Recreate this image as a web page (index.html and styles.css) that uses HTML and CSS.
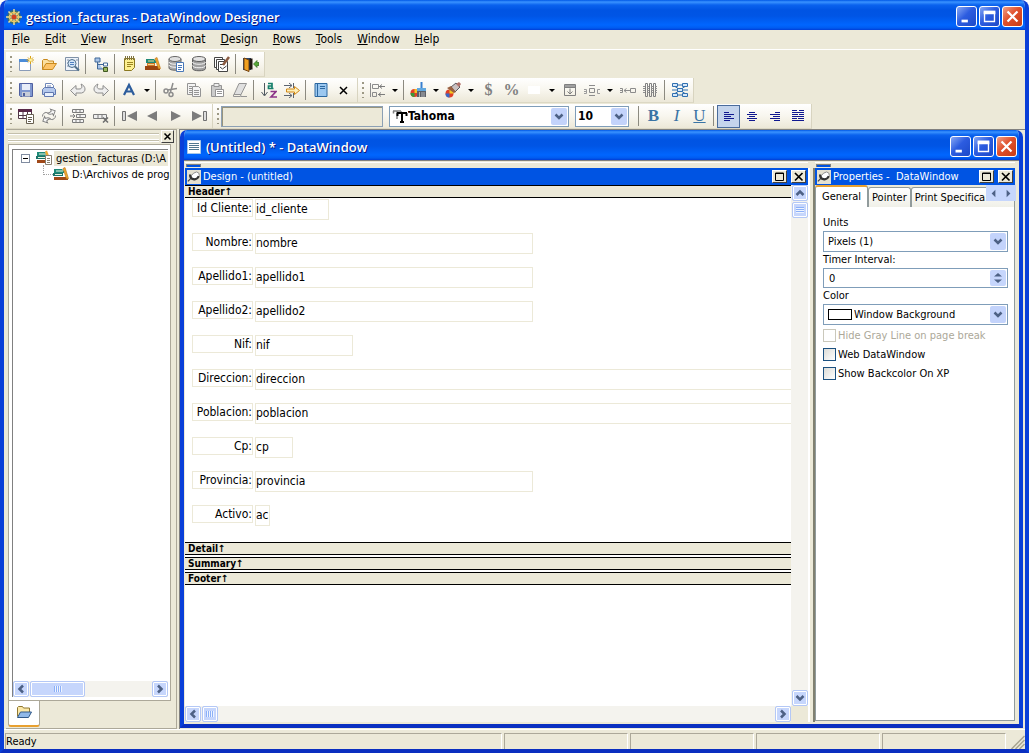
FILE: index.html
```html
<!DOCTYPE html>
<html lang="es">
<head>
  <meta charset="UTF-8">
  <title>gestion_facturas - DataWindow Designer</title>
  <link rel="stylesheet" href="styles.css">
</head>
<body>
  <div class="window">
    <header class="titlebar">
      <svg class="app-icon" viewBox="0 0 16 16"><circle cx="8" cy="8" r="7" fill="#3d6f6a"/><path d="M8 0v16M0 8h16M2.500 2.500l11 11M13.500 2.500l-11 11" stroke="#e8dc9a" stroke-width="1.500"/><circle cx="8" cy="8" r="4.500" fill="none" stroke="#f0c860" stroke-width="1.500"/><circle cx="8" cy="8" r="2.500" fill="#d04020"/></svg>
      <h1>gestion_facturas - DataWindow Designer</h1>
      <div class="caption-buttons">
        <button class="cap" aria-label="Minimize"><svg viewBox="0 0 21 21"><path d="M5 14h7v3H5z" fill="#fff"/></svg></button>
        <button class="cap" aria-label="Maximize"><svg viewBox="0 0 21 21"><path d="M5 6h11v10H5z" fill="none" stroke="#fff" stroke-width="1.500"/><path d="M4 4h13v4H4z" fill="#fff"/></svg></button>
        <button class="cap cap-close" aria-label="Close"><svg viewBox="0 0 21 21"><path d="M5 5l11 11M16 5L5 16" stroke="#fff" stroke-width="2.500"/></svg></button>
      </div>
    </header>

    <nav class="menu">
      <a href="#"><u>F</u>ile</a>
      <a href="#"><u>E</u>dit</a>
      <a href="#"><u>V</u>iew</a>
      <a href="#"><u>I</u>nsert</a>
      <a href="#">F<u>o</u>rmat</a>
      <a href="#"><u>D</u>esign</a>
      <a href="#"><u>R</u>ows</a>
      <a href="#"><u>T</u>ools</a>
      <a href="#"><u>W</u>indow</a>
      <a href="#"><u>H</u>elp</a>
    </nav>

    <div class="toolbars">
      <div class="bar-row">
        <div class="bar">
          <span class="grip"></span>
          <button class="tb" aria-label="New"><svg viewBox="0 0 16 16"><path d="M1.500 4.500h11v10h-11z" fill="#fff" stroke="#8a9cb8"/><path d="M1 3h9v3H1z" fill="#4c8cd8"/><path d="M12.500 0v8M8.500 4h8M10 1.500l5 5M15 1.500l-5 5" stroke="#d8a010"/><circle cx="12.500" cy="4" r="1.500" fill="#fff4a0"/></svg></button>
          <button class="tb" aria-label="Open"><svg viewBox="0 0 16 16"><path d="M1.500 13.500V4.500l1-1h4l1 1.500h5v3" fill="#fbe0a0" stroke="#c98a1e"/><path d="M1.500 13.500L5 7.500h10.500l-4 6z" fill="#fdc468" stroke="#c98a1e"/></svg></button>
          <button class="tb" aria-label="Preview"><svg viewBox="0 0 16 16"><path d="M1.500 1.500h13v13h-13z" fill="#eef3fa" stroke="#8092a8"/><path d="M3 4h2M3 7h1M3 10h2M12 4h2" stroke="#8092a8"/><circle cx="8" cy="7.500" r="4" fill="#d4e6f8" stroke="#50708c"/><path d="M6 6.500h4M6 8.500h4" stroke="#5080c0"/><path d="M11 10.500l4 4" stroke="#50708c" stroke-width="2"/></svg></button>
          <span class="sep"></span>
          <button class="tb" aria-label="System tree"><svg viewBox="0 0 16 16"><path d="M2 2h5v4H2zM4.500 6v7H10M4.500 8.500H10" fill="#a8c4e8" stroke="#406898"/><path d="M10.500 7h4v3h-4z" fill="#fff" stroke="#406898"/><path d="M10.500 11.500h4v4h-4z" fill="#98b860" stroke="#405820"/></svg></button>
          <span class="sep"></span>
          <button class="tb" aria-label="Output"><svg viewBox="0 0 16 16"><path d="M2.500 2.500h10v9l-3 3h-7z" fill="#fdf090" stroke="#8a7820"/><path d="M3.500 0v4M5.500 0v4M7.500 0v4M9.500 0v4M11.500 0v4" stroke="#807440"/><path d="M5 6.500h6M5 8.500h6M5 10.500h4" stroke="#9a8420"/></svg></button>
          <button class="tb" aria-label="Library list"><svg viewBox="0 0 16 16"><path d="M1 3h8l2 2v2H1z" fill="#1f8a78"/><path d="M2 7h8v3H2z" fill="#d07828"/><path d="M0 10h15v4H0z" fill="#9a4410"/><path d="M3 5h6M3 8.500h6" stroke="#f4d890"/><path d="M10 2.500l2-1 3.500 11-2 .5z" fill="#f0a830" stroke="#b87010" stroke-width=".6"/></svg></button>
          <button class="tb" aria-label="Database profile"><svg viewBox="0 0 16 16"><path d="M1 3v9c0 3 12 3 12 0V3z" fill="#a8a8a8" stroke="#686868"/><ellipse cx="7" cy="3" rx="6" ry="2.500" fill="#e0e0e0" stroke="#686868"/><path d="M1 6c0 3 12 3 12 0M1 9c0 3 12 3 12 0" fill="none" stroke="#f4f4f4"/><path d="M8.500 6.500h7v9h-7z" fill="#fff" stroke="#4878b8"/><path d="M10 9.500h4M10 11.500h4M10 13.500h3" stroke="#4878b8"/></svg></button>
          <button class="tb" aria-label="Database"><svg viewBox="0 0 16 16"><path d="M1.500 3v9.500c0 3 13 3 13 0V3z" fill="#a0a0a0" stroke="#606060"/><ellipse cx="8" cy="3" rx="6.500" ry="2.500" fill="#e4e4e4" stroke="#606060"/><path d="M1.500 6c0 3 13 3 13 0M1.500 9.500c0 3 13 3 13 0" fill="none" stroke="#f4f4f4"/></svg></button>
          <button class="tb" aria-label="Edit"><svg viewBox="0 0 16 16"><path d="M.5 1.500h8v10h-8z" fill="#fff" stroke="#444"/><path d="M2.500 3.500h8v10h-8z" fill="#fff" stroke="#444"/><path d="M4.500 5.500h9v10h-9z" fill="#fff" stroke="#444"/><path d="M6 11l2.500 2 4-3M6 8.500h3" fill="none" stroke="#444"/><path d="M9 9l6-8" stroke="#8a5a40" stroke-width="2.500"/></svg></button>
          <span class="sep"></span>
          <button class="tb" aria-label="Exit"><svg viewBox="0 0 16 16"><path d="M0 2h8v12H0z" fill="#284a78"/><path d="M1 2l5 2v11.500l-5-2z" fill="#f0a020" stroke="#704010"/><path d="M6.500 2.500h3v11h-3z" fill="#201810"/><path d="M10.500 8L14 4.500v2h2v3h-2v2z" fill="#58a838" stroke="#306820" stroke-width=".7"/></svg></button>
        </div>
      </div>

      <div class="bar-row">
        <div class="bar">
          <span class="grip"></span>
          <button class="tb" aria-label="Save"><svg viewBox="0 0 16 16"><path d="M1.500 1.500h13v13h-12l-1-1z" fill="#8098d0" stroke="#5060a0"/><path d="M4 2h8v6H4z" fill="#e8edf8"/><path d="M4 10h8v4.500H4z" fill="#c8cdd8"/><path d="M5 11h2v3H5z" fill="#50609c"/></svg></button>
          <button class="tb" aria-label="Print"><svg viewBox="0 0 16 16"><path d="M4.500 7V1.500h6l2 2V7" fill="#fff" stroke="#7088b8"/><path d="M1.500 7.500l2-2h9l2 2v5h-13z" fill="#b4c8ec" stroke="#6078b0"/><path d="M3.500 10.500h9v4h-9z" fill="#e8f0fc" stroke="#6078b0"/><path d="M6 4h4" stroke="#7088b8"/></svg></button>
          <span class="sep"></span>
          <button class="tb" aria-label="Undo"><svg viewBox="0 0 16 16"><path d="M.5 8.500l5.500-5V7h3c3 0 3.500-2 2-5 5 2 5.500 8 .5 9H6v3z" fill="#eee" stroke="#8c8c8c"/></svg></button>
          <button class="tb" aria-label="Redo"><svg viewBox="0 0 16 16"><path d="M15.500 8.500l-5.500-5V7H7C4 7 3.500 5 5 2 0 4-.5 10 4.500 11H10v3z" fill="#eee" stroke="#8c8c8c"/></svg></button>
          <span class="sep"></span>
          <button class="tb drop" aria-label="Text"><svg viewBox="0 0 16 16"><path d="M3 13L8 3l5 10M4.500 9.500h7" fill="none" stroke="#2c5c9c" stroke-width="2.200"/></svg></button>
          <span class="sep"></span>
          <button class="tb" aria-label="Cut"><svg viewBox="0 0 16 16"><path d="M10 1L7.500 10M4.500 8L14 6.500" stroke="#8c8c8c" stroke-width="1.500"/><circle cx="3" cy="9" r="2" fill="none" stroke="#8c8c8c" stroke-width="1.500"/><circle cx="8" cy="12.500" r="2" fill="none" stroke="#8c8c8c" stroke-width="1.500"/></svg></button>
          <button class="tb" aria-label="Copy"><svg viewBox="0 0 16 16"><path d="M1.500 1.500h8v11h-8z" fill="#f4f4f4" stroke="#949494"/><path d="M6.500 4.500h6l2 2v8h-8z" fill="#f4f4f4" stroke="#949494"/><path d="M3 4.500h3M3 6.500h3M3 8.500h3M3 10.500h3M8 8.500h5M8 10.500h5M8 12.500h5" stroke="#949494"/></svg></button>
          <button class="tb" aria-label="Paste"><svg viewBox="0 0 16 16"><path d="M2.500 3.500h10v11h-10z" fill="#ccc" stroke="#949494"/><path d="M5 1.500h5v3H5z" fill="#eee" stroke="#949494"/><path d="M6.500 7.500h8v7h-8z" fill="#fff" stroke="#949494"/><path d="M8 9.500h5M8 11.500h5" stroke="#949494"/></svg></button>
          <button class="tb" aria-label="Clear"><svg viewBox="0 0 16 16"><path d="M7 1.500h7.500L9 12.500H2z" fill="#e0e0e0" stroke="#949494"/><path d="M1.500 12.500v2h7L9 12.500M9 14.500h6" fill="none" stroke="#949494"/></svg></button>
          <span class="sep"></span>
          <button class="tb" aria-label="Sort"><svg viewBox="0 0 16 16"><path d="M3.500 1v12M.5 10l3 4 3-4" fill="none" stroke="#505860"/><path d="M7 1.500h4v5M11 4H7.500v2.500H12.500" fill="none" stroke="#18806c" stroke-width="1.700"/><path d="M9.500 9.500H15L10 15h6" fill="none" stroke="#8c3488" stroke-width="1.700"/></svg></button>
          <button class="tb" aria-label="Tab order"><svg viewBox="0 0 16 16"><path d="M0 3.500h8M0 13.500h8M5 1l3 2.500L5 6M5 11l3 2.500L5 16M9.500 1v5M9.500 11v5" fill="none" stroke="#5c6470"/><path d="M2.500 7h8V4.500l5 4-5 4V10h-8z" fill="#fff0b8" stroke="#d08818"/></svg></button>
          <span class="sep"></span>
          <button class="tb" aria-label="Properties"><svg viewBox="0 0 16 16"><path d="M2 1.500h12v13H2z" fill="#9cc8f0" stroke="#2c68a0"/><path d="M4.500 2v12" stroke="#2c68a0"/><path d="M7 4.500h5M7 6.500h5" stroke="#2c68a0"/></svg></button>
          <button class="tb" aria-label="Close"><svg viewBox="0 0 16 16"><path d="M4 5l7 7M11 5l-7 7" stroke="#000" stroke-width="1.500"/></svg></button>
        </div>
        <div class="bar">
          <span class="grip"></span>
          <button class="tb drop" aria-label="Align"><svg viewBox="0 0 16 16"><path d="M1.500 1v14M3.500 2.500h6v4h-6zM3.500 10.500h4v4h-4z" fill="none" stroke="#8c8c8c"/><path d="M10 4.500h6M13 2.500l-2.500 2 2.500 2M9 12.500h7M12 10.500l-2.500 2 2.500 2" fill="none" stroke="#7c7c7c"/></svg></button>
          <span class="sep"></span>
          <button class="tb drop" aria-label="Background colour"><svg viewBox="0 0 16 16"><circle cx="4.500" cy="11" r="4" fill="#e04028"/><path d="M4.500 7a4 4 0 014 4h-4z" fill="#f4c820"/><path d="M.5 11h4v4a4 4 0 01-4-4z" fill="#3c9838"/><path d="M10.500 0h2v6h-2z" fill="#3880d0"/><path d="M7 6h9v3H7z" fill="#60a8e0"/><path d="M7 9h9v6H7z" fill="#5c6068"/><path d="M9.500 10v5M12 10v5M14 10v5" stroke="#b0b4b8"/></svg></button>
          <button class="tb drop" aria-label="Foreground colour"><svg viewBox="0 0 16 16"><circle cx="4.500" cy="11.500" r="4" fill="#e04028"/><path d="M4.500 7.500a4 4 0 014 4h-4z" fill="#f4c820"/><path d="M.5 11.500h4v4a4 4 0 01-4-4z" fill="#3868c8"/><path d="M6 5l5-4 4 4-5 5z" fill="#c8c0c0" stroke="#585860"/><path d="M11 2l3-2 2 2-2 3z" fill="#b07068"/><path d="M2 6l4-2 5 6-2 1z" fill="#986040"/></svg></button>
          <button class="tb sign" aria-label="Currency">$</button>
          <button class="tb sign" aria-label="Percent">%</button>
          <button class="tb drop" aria-label="Border"><svg viewBox="0 0 16 16"><path d="M2 4h12v8H2z" fill="#fff"/></svg></button>
          <button class="tb" aria-label="Slide"><svg viewBox="0 0 16 16"><path d="M2.500 2.500h11v11h-11zM2.500 5.500h11M8 6.500v5M5.500 9.500L8 12l2.500-2.500" fill="none" stroke="#808080"/><path d="M3 3h10v2H3z" fill="#a0a0a0"/></svg></button>
          <button class="tb drop" aria-label="Space"><svg viewBox="0 0 16 16"><path d="M5 3.500h6M5.500 6.500h5v4h-5zM5 13.500h6" fill="none" stroke="#8c8c8c"/><path d="M0 7.500h2.500v4H0M0 9.500h2.500M16 7.500h-2.500v4H16" fill="none" stroke="#9c9c9c"/></svg></button>
          <button class="tb" aria-label="Width"><svg viewBox="0 0 16 16"><path d="M0 6.500h2.500v4H0M0 8.500h2.500M4 8.500h6M6.500 6.500L4 8.500l2.500 2M10.500 6.500h5v4h-5z" fill="none" stroke="#8c8c8c"/></svg></button>
          <button class="tb" aria-label="Columns"><svg viewBox="0 0 16 16"><path d="M2.500 1.500h2v13h-2zM6.500 1.500h2v13h-2zM10.500 1.500h2v13h-2z" fill="none" stroke="#808080"/><path d="M0 4.500h16M0 6.500h16M0 8.500h16M0 10.500h16" stroke="#909090" stroke-dasharray="2 2"/></svg></button>
          <span class="sep"></span>
          <button class="tb" aria-label="Grid"><svg viewBox="0 0 16 16"><path d="M.5 1.500h5v3h-5zM10.500 1.500h5v3h-5zM.5 11.500h5v3h-5zM10.500 11.500h5v3h-5zM5.500 6.500h5v3h-5z" fill="#d8e8f8" stroke="#3070b0"/><path d="M6 3h4M0 8h5M11 8h5M6 13h4M3 4.500l3 2M13 4.500l-3 2M6 9.500l-3 2M10 9.500l3 2" stroke="#3070b0"/></svg></button>
        </div>
      </div>

      <div class="bar-row">
        <div class="bar">
          <span class="grip"></span>
          <button class="tb" aria-label="Retrieve"><svg viewBox="0 0 16 16"><path d="M.5 1.500h13v9H.5z" fill="#fff" stroke="#503848"/><path d="M0 1h14v3H0z" fill="#582848"/><path d="M1 7.500h8M5 4v6M9.500 4v3" stroke="#503848"/><path d="M8.500 6.500h7v9h-7z" fill="#fff" stroke="#686050"/><path d="M10 9.500h4M10 11.500h4M10 13.500h3" stroke="#686050"/></svg></button>
          <button class="tb" aria-label="Refresh"><svg viewBox="0 0 16 16"><path d="M8.500 1.500h5v5L12 5C10 7 8 7 6.500 6 8.500 6 9.500 4.500 10 3z" fill="#f4f4f4" stroke="#808080" transform="rotate(20 10 4)"/><path d="M7.500 14.500h-5v-5L4 11c2-2 4-2 5.500-1-2 0-3 1.500-3.500 3z" fill="#f4f4f4" stroke="#808080" transform="rotate(20 6 12)"/><path d="M1.500 8.500c0-3 2-4 4-4M14.500 7.500c0 3-2 4-4 4" fill="none" stroke="#808080"/></svg></button>
          <span class="sep"></span>
          <button class="tb" aria-label="Insert row"><svg viewBox="0 0 16 16"><path d="M2.500 1.500h11v3h-11zM6.500 6.500h9v3h-9zM2.500 11.500h11v3h-11z" fill="#f4f4f4" stroke="#7c7c7c"/><path d="M6 2v3M10 2v3M10 7v3M6 12v3M10 12v3M0 8h5M3 6l2 2-2 2" fill="none" stroke="#7c7c7c"/></svg></button>
          <button class="tb" aria-label="Delete row"><svg viewBox="0 0 16 16"><path d="M.5 6.500h13v4H.5z" fill="#eee" stroke="#7c7c7c"/><path d="M5 7v3M9 7v3" stroke="#7c7c7c"/><path d="M10 9.500l5 5M15 9.500l-5 5" stroke="#6c6c6c" stroke-width="1.500"/></svg></button>
          <span class="sep"></span>
          <button class="tb" aria-label="First"><svg viewBox="0 0 16 16"><path d="M.5 3.500h3v9h-3z" fill="#ddd" stroke="#707070"/><path d="M5 8l10-5v10z" fill="#7c7c7c"/></svg></button>
          <button class="tb" aria-label="Previous"><svg viewBox="0 0 16 16"><path d="M2 8l10-5v10z" fill="#7c7c7c"/></svg></button>
          <button class="tb" aria-label="Next"><svg viewBox="0 0 16 16"><path d="M13 8L3 3v10z" fill="#7c7c7c"/></svg></button>
          <button class="tb" aria-label="Last"><svg viewBox="0 0 16 16"><path d="M12.500 3.500h3v9h-3z" fill="#ddd" stroke="#707070"/><path d="M11 8L1 3v10z" fill="#7c7c7c"/></svg></button>
        </div>
        <div class="bar">
          <span class="grip"></span>
          <input class="text-edit" type="text" aria-label="Text" disabled>
          <div class="combo combo-font">
            <svg viewBox="0 0 16 16"><path d="M1 3h8M5 3v8M1.500 3v2.500M9 3v2" stroke="#808080" stroke-width="1.500"/><path d="M5 5h10M10 5v9M5.500 5v3M14.500 5v3M8 14h4" stroke="#000" stroke-width="2"/></svg>
            <select aria-label="Font"><option>Tahoma</option></select>
          </div>
          <div class="combo combo-size">
            <select aria-label="Font size"><option>10</option></select>
          </div>
          <span class="sep"></span>
          <button class="tb letter bold">B</button>
          <button class="tb letter italic">I</button>
          <button class="tb letter under">U</button>
          <span class="sep"></span>
          <button class="tb active" aria-label="Align left"><svg viewBox="0 0 16 16"><path d="M3 4.500h5M3 6.500h10M3 8.500h7M3 10.500h10M3 12.500h6" stroke="#101890"/></svg></button>
          <button class="tb" aria-label="Align centre"><svg viewBox="0 0 16 16"><path d="M5 4.500h6M3 6.500h10M5 8.500h6M3 10.500h10M5 12.500h6" stroke="#101890"/></svg></button>
          <button class="tb" aria-label="Align right"><svg viewBox="0 0 16 16"><path d="M8 4.500h5M3 6.500h10M6 8.500h7M3 10.500h10M7 12.500h6" stroke="#101890"/></svg></button>
          <button class="tb" aria-label="Justify"><svg viewBox="0 0 16 16"><path d="M2 2.500h5M9 2.500h5M2 4.500h12M2 6.500h6M9 6.500h5M2 8.500h12M2 10.500h5M8 10.500h6M2 12.500h12" stroke="#101890"/></svg></button>
        </div>
      </div>
    </div>

    <main class="workspace">
      <aside class="dock">
        <div class="dock-head">
          <span class="dock-grip"></span>
          <button class="box-btn dock-close" aria-label="Close"><svg viewBox="0 0 12 12"><path d="M2.500 2.500l6 6M8.500 2.500l-6 6" stroke="#000" stroke-width="1.500"/></svg></button>
        </div>
        <div class="dock-panel">
          <div class="tree">
            <ul>
              <li class="root">
                <button class="toggle" aria-label="Collapse"></button>
                <svg viewBox="0 0 16 16"><path d="M1 2h8l2 2v2H1z" fill="#1f8a78"/><path d="M0 6h10v3H0z" fill="#1c7468"/><path d="M1 10h11v3H1z" fill="#a04818"/><path d="M3 4h7M2 7.500h7" stroke="#e8f4e0"/><path d="M9 1.500l2-1 3 8-2 3z" fill="#f0a830"/><path d="M9.500 5.500h6v9h-6z" fill="#fff" stroke="#8a8070"/><path d="M11 8.500h3M11 10.500h3M11 12.500h3" stroke="#8a8070"/></svg>
                <span class="picked">gestion_facturas (D:\A</span>
              </li>
              <li class="leaf">
                <span class="branch"></span>
                <svg viewBox="0 0 16 16"><path d="M1 3h8l2 2v2H1z" fill="#1f8a78"/><path d="M0 7h10v3H0z" fill="#1c7468"/><path d="M1 11h14v3H1z" fill="#a04818"/><path d="M3 5h7M2 8.500h7" stroke="#e8f4e0"/><path d="M10 2.500l2-1 3.500 11-2 .5z" fill="#f0a830" stroke="#b87010" stroke-width=".6"/></svg>
                <span>D:\Archivos de prog</span>
              </li>
            </ul>
            <div class="scroll horiz">
              <button class="sb left" aria-label="Scroll left"></button>
              <span class="thumb wide"></span>
              <button class="sb right" aria-label="Scroll right"></button>
            </div>
          </div>
        </div>
        <button class="dock-tab" aria-label="Workspace"><svg viewBox="0 0 16 16"><path d="M1.500 12.500v-9l1-1h4l1 1.500h6v4" fill="#fbe8a8" stroke="#907830"/><path d="M1.500 13.500l3-5.500h11l-3 5.500z" fill="#90b8e8" stroke="#305888"/></svg></button>
      </aside>

      <section class="mdi">
        <div class="child">
          <header class="titlebar child-title">
            <svg class="app-icon" viewBox="0 0 16 16"><path d="M1.500 1.500h13v13h-13z" fill="#fff" stroke="#a8c8e8"/><path d="M3 4.500h10M3 6.500h10M3 8.500h10M3 10.500h10" stroke="#507890"/></svg>
            <h2>(Untitled) * - DataWindow</h2>
            <div class="caption-buttons">
              <button class="cap" aria-label="Minimize"><svg viewBox="0 0 21 21"><path d="M5 14h7v3H5z" fill="#fff"/></svg></button>
              <button class="cap" aria-label="Maximize"><svg viewBox="0 0 21 21"><path d="M5 6h11v10H5z" fill="none" stroke="#fff" stroke-width="1.500"/><path d="M4 4h13v4H4z" fill="#fff"/></svg></button>
              <button class="cap cap-close" aria-label="Close"><svg viewBox="0 0 21 21"><path d="M5 5l11 11M16 5L5 16" stroke="#fff" stroke-width="2.500"/></svg></button>
            </div>
          </header>

          <div class="panes">
            <section class="pane design">
              <div class="strip"><span></span></div>
              <div class="pane-title">
                <svg class="pin" viewBox="0 0 16 16"><path d="M0 0h16v16H0z" fill="#e4e0d0"/><path d="M1 13l4-4" stroke="#444" stroke-width="1.500"/><ellipse cx="9.500" cy="6.500" rx="5" ry="3.500" fill="#fff" stroke="#888" transform="rotate(-35 9.500 6.500)"/><path d="M3.500 5c0 6 7 8 10 2" fill="none" stroke="#333" stroke-width="2.500"/></svg>
                <h3>Design - (untitled)</h3>
                <button class="box-btn" aria-label="Maximize pane"><svg viewBox="0 0 12 12"><path d="M1.500 2h8v7.500h-8zM1 2.500h9" fill="none" stroke="#000"/></svg></button>
                <button class="box-btn" aria-label="Close pane"><svg viewBox="0 0 12 12"><path d="M2 2l7.500 7.500M9.500 2L2 9.500" stroke="#000" stroke-width="1.700"/></svg></button>
              </div>
              <div class="design-body">
                <div class="canvas">
                  <div class="band band-first">Header<span>↑</span></div>
                  <div class="form">
                    <label for="id_cliente">Id Cliente:</label><input id="id_cliente" class="w-id" value="id_cliente" readonly>
                    <label for="nombre">Nombre:</label><input id="nombre" class="w-name" value="nombre" readonly>
                    <label for="apellido1">Apellido1:</label><input id="apellido1" class="w-name" value="apellido1" readonly>
                    <label for="apellido2">Apellido2:</label><input id="apellido2" class="w-name" value="apellido2" readonly>
                    <label for="nif">Nif:</label><input id="nif" class="w-nif" value="nif" readonly>
                    <label for="direccion">Direccion:</label><input id="direccion" class="w-full" value="direccion" readonly>
                    <label for="poblacion">Poblacion:</label><input id="poblacion" class="w-full" value="poblacion" readonly>
                    <label for="cp">Cp:</label><input id="cp" class="w-cp" value="cp" readonly>
                    <label for="provincia">Provincia:</label><input id="provincia" class="w-name" value="provincia" readonly>
                    <label for="activo">Activo:</label><input id="activo" class="w-flag" value="ac" readonly>
                  </div>
                  <div class="band">Detail<span>↑</span></div>
                  <div class="band">Summary<span>↑</span></div>
                  <div class="band">Footer<span>↑</span></div>
                </div>
                <div class="scroll vert">
                  <button class="sb up" aria-label="Scroll up"></button>
                  <span class="thumb"></span>
                  <button class="sb down" aria-label="Scroll down"></button>
                </div>
                <div class="scroll horiz">
                  <button class="sb left" aria-label="Scroll left"></button>
                  <span class="thumb"></span>
                  <button class="sb right" aria-label="Scroll right"></button>
                </div>
              </div>
            </section>

            <div class="splitter"></div>

            <section class="pane props">
              <div class="strip"><span></span></div>
              <div class="pane-title">
                <svg class="pin" viewBox="0 0 16 16"><path d="M0 0h16v16H0z" fill="#e4e0d0"/><path d="M1 13l4-4" stroke="#444" stroke-width="1.500"/><ellipse cx="9.500" cy="6.500" rx="5" ry="3.500" fill="#fff" stroke="#888" transform="rotate(-35 9.500 6.500)"/><path d="M3.500 5c0 6 7 8 10 2" fill="none" stroke="#333" stroke-width="2.500"/></svg>
                <h3>Properties -&nbsp; DataWindow</h3>
                <button class="box-btn" aria-label="Maximize pane"><svg viewBox="0 0 12 12"><path d="M1.500 2h8v7.500h-8zM1 2.500h9" fill="none" stroke="#000"/></svg></button>
                <button class="box-btn" aria-label="Close pane"><svg viewBox="0 0 12 12"><path d="M2 2l7.500 7.500M9.500 2L2 9.500" stroke="#000" stroke-width="1.700"/></svg></button>
              </div>
              <div class="tabs">
                <button class="tab selected">General</button>
                <button class="tab">Pointer</button>
                <button class="tab cut">Print Specifica</button>
                <div class="tab-scroll">
                  <button aria-label="Previous tabs"><svg viewBox="0 0 16 16"><path d="M6 8l4-4v8z" fill="#4d6185"/></svg></button>
                  <button aria-label="Next tabs"><svg viewBox="0 0 16 16"><path d="M10 8L6 4v8z" fill="#4d6185"/></svg></button>
                </div>
              </div>
              <form class="prop-page">
                <label for="units">Units</label>
                <div class="combo"><select id="units"><option>Pixels (1)</option></select></div>
                <label for="timer">Timer Interval:</label>
                <div class="combo spin">
                  <input id="timer" type="text" value="0">
                  <button type="button" aria-label="Step"><svg viewBox="0 0 16 16"><path d="M4 6.500L8 3l4 3.500zM4 9.500L8 13l4-3.500z" fill="#4d6185"/></svg></button>
                </div>
                <label for="color">Color</label>
                <div class="combo color"><i></i><select id="color"><option>Window Background</option></select></div>
                <label class="check off"><input type="checkbox" disabled>Hide Gray Line on page break</label>
                <label class="check"><input type="checkbox">Web DataWindow</label>
                <label class="check"><input type="checkbox">Show Backcolor On XP</label>
              </form>
            </section>
          </div>
        </div>
      </section>
    </main>

    <footer class="status">
      <span class="cell first">Ready</span>
      <span class="cell"></span>
      <span class="cell"></span>
      <span class="cell"></span>
      <span class="cell"></span>
      <svg class="resize" viewBox="0 0 16 16"><path d="M3 16L16 3M7 16l9-9M11 16l5-5" stroke="#a8a490" stroke-width="1.500"/></svg>
    </footer>
  </div>
</body>
</html>
```

FILE: styles.css
```css
* {
  box-sizing: border-box;
}
body {
  margin: 0;
  font-family: "DejaVu Sans Condensed", "DejaVu Sans", sans-serif;
  font-size: 11px;
  color: #000;
  background: #fff;
}
button, input, select {
  font: inherit;
  color: inherit;
  margin: 0;
  padding: 0;
}
h1, h2, h3, ul {
  margin: 0;
  padding: 0;
}

/* main window */
.window {
  display: flex;
  flex-direction: column;
  height: 100vh;
  border: 4px solid #0a3fd8;
  border-top: 0;
  border-bottom-color: #0a2fc0;
  border-radius: 8px 8px 0 0;
  background: #ece9d8;
  overflow: hidden;
}
.titlebar {
  display: flex;
  flex: none;
  align-items: center;
  gap: 4px;
  height: 30px;
  margin: 0 -4px;
  padding: 3px 6px 0 6px;
  background: linear-gradient(#0058e6 0, #3a93ff 2px, #0a62ee 5px, #0054e3 10px, #0055e5 16px, #0066ff 25px, #005bf0 28px, #003dd7 30px);
}
.titlebar h1, .titlebar h2 {
  flex: 1;
  font: 600 13px "Open Sans", sans-serif;
  color: #fff;
  text-shadow: 1px 1px #0a1883;
  white-space: nowrap;
}
.app-icon {
  width: 16px;
  height: 16px;
}
.caption-buttons {
  display: flex;
  gap: 2px;
}
.cap {
  width: 21px;
  height: 21px;
  border: 1px solid #fff;
  border-radius: 3px;
  background: linear-gradient(135deg, #88a8f4, #2c5ce0 45%, #1c49c8);
}
.cap svg {
  display: block;
  width: 19px;
  height: 19px;
}
.cap-close {
  background: linear-gradient(135deg, #f0a088, #e0502c 45%, #c83c14);
}

/* menu */
.menu {
  display: flex;
  flex: none;
  gap: 15px;
  height: 20px;
  padding: 1px 8px;
  border-bottom: 1px solid #fff;
  font-size: 12px;
  line-height: 17px;
}
.menu a {
  color: #000;
  text-decoration: none;
}

/* toolbars */
.toolbars {
  flex: none;
  padding: 2px 2px 0;
}
.bar-row {
  display: flex;
  height: 26px;
}
.bar-row:last-child {
  height: 25px;
}
.bar {
  display: flex;
  align-items: center;
  height: 25px;
  padding-right: 2px;
  border-right: 1px solid #d8d4c0;
  border-bottom: 1px solid #dcd8c4;
  background: linear-gradient(#fff, #f8f6ee 50%, #ece8d8);
}
.grip {
  width: 2px;
  height: 16px;
  margin: 0 2px 0 4px;
  background: repeating-linear-gradient(#9c9884 0 2px, transparent 2px 5px);
}
.sep {
  width: 1px;
  height: 20px;
  margin: 0 3px 0 2px;
  background: #8c8a80;
}
.tb {
  display: flex;
  align-items: center;
  justify-content: center;
  width: 23px;
  height: 23px;
  border: 1px solid transparent;
  background: none;
}
.tb svg {
  width: 16px;
  height: 16px;
}
.tb.drop {
  width: 35px;
  justify-content: space-between;
  padding: 0 2px;
}
.tb.drop::after {
  content: "";
  border: 3px solid transparent;
  border-top-color: #000;
  border-bottom: 0;
}
.tb.active {
  border-color: #4a6c9c;
  background: #c4d4ec;
}
.sign {
  font: bold 16px "Liberation Serif", serif;
  color: #808080;
}
.letter {
  font: 17px "Liberation Serif", serif;
  color: #3a74a4;
}
.bold {
  font-weight: bold;
}
.italic {
  font-style: italic;
}
.under {
  text-decoration: underline;
}
.text-edit {
  width: 162px;
  height: 21px;
  border: 1px solid #8ca0b4;
  box-shadow: inset 1px 1px #98947c;
  background: #ece9d8;
}

/* combos */
.combo {
  display: flex;
  align-items: center;
  height: 21px;
  border: 1px solid #7f9db9;
  background: #fff;
}
.combo select {
  flex: 1;
  min-width: 0;
  height: 19px;
  padding: 0 18px 0 4px;
  border: 0;
  border-radius: 0;
  appearance: none;
  background: #fff url("data:image/svg+xml,%3Csvg xmlns='http://www.w3.org/2000/svg' width='16' height='17'%3E%3Crect width='16' height='17' rx='2' fill='%23c3d3fb'/%3E%3Cpath d='M4.500 6.500l3.500 3.500 3.500-3.500' fill='none' stroke='%234d6185' stroke-width='2.500'/%3E%3C/svg%3E") no-repeat right 1px center;
}
.combo-font, .combo-size {
  margin-left: 6px;
}
.combo-font select, .combo-size select {
  font: bold 12px "DejaVu Sans Condensed", sans-serif;
}
.combo-font {
  width: 180px;
}
.combo-font svg {
  width: 16px;
  height: 16px;
  margin-left: 2px;
}
.combo-font select {
  padding-left: 0;
}
.combo-size {
  width: 54px;
  margin-right: 7px;
}
.combo-size select {
  padding-left: 2px;
}

/* workspace */
.workspace {
  display: flex;
  flex: 1;
  gap: 2px;
  min-height: 0;
  padding: 0 0 0 2px;
}
.dock {
  display: flex;
  flex: none;
  flex-direction: column;
  width: 171px;
  padding: 1px 5px 1px 2px;
  border-top: 1px solid #aca899;
  border-right: 1px solid #aca899;
  border-bottom: 1px solid #aca899;
}
.dock-head {
  display: flex;
  align-items: center;
  justify-content: space-between;
  gap: 2px;
  height: 11px;
  margin-right: -3px;
}
.dock-grip {
  flex: 1;
  height: 8px;
  border: 1px solid #c4c0ac;
  border-width: 1px 0;
  box-shadow: inset 0 1px #fff, 0 1px #fff, inset 0 -1px #fff;
}
.box-btn {
  flex: none;
  width: 15px;
  height: 13px;
  border: 1px solid;
  border-color: #fff #404040 #404040 #fff;
  background: #ece9d8;
}
.box-btn svg {
  display: block;
  width: 12px;
  height: 12px;
  margin: 0 auto;
}
.dock-close {
  width: 13px;
}
.dock-panel {
  display: flex;
  flex: 1;
  min-height: 0;
  margin-top: 2px;
  padding: 4px 2px 3px 3px;
  border: 1px solid #aca899;
  background: #fff;
}
.tree {
  display: flex;
  flex: 1;
  flex-direction: column;
  justify-content: space-between;
  min-width: 0;
  border: 1px solid #808080;
  border-width: 1px 0 0 1px;
}
.tree ul {
  list-style: none;
}
.tree li {
  display: flex;
  align-items: center;
  height: 16px;
  white-space: nowrap;
}
.tree svg {
  flex: none;
  width: 16px;
  height: 16px;
}
.root {
  padding-left: 8px;
}
.toggle {
  flex: none;
  width: 9px;
  height: 9px;
  margin-right: 6px;
  border: 1px solid #808ca0;
  background: linear-gradient(#000, #000) center / 5px 1px no-repeat #fff;
}
.picked {
  flex: 1;
  height: 15px;
  margin-left: 2px;
  padding-left: 2px;
  line-height: 15px;
  background: #ece9d8;
}
.leaf {
  padding-left: 30px;
}
.leaf svg {
  margin-right: 3px;
}
.branch {
  flex: none;
  width: 10px;
  height: 10px;
  margin-top: -8px;
  border: 1px dotted #a0a0a0;
  border-width: 0 0 1px 1px;
}
.dock-tab {
  width: 32px;
  height: 26px;
  border: 1px solid #aca899;
  border-top: 0;
  border-bottom: 2px solid #e8a030;
  border-radius: 0 0 3px 3px;
  background: #fff;
}
.dock-tab svg {
  width: 16px;
  height: 16px;
}

/* scroll bars */
.scroll {
  display: flex;
  flex: none;
  gap: 1px;
  background: #f4f3ee;
}
.horiz {
  height: 16px;
}
.vert {
  flex-direction: column;
  width: 17px;
  align-items: center;
}
.sb, .thumb {
  flex: none;
  width: 16px;
  height: 16px;
  border: 1px solid #b4c8f6;
  border-radius: 2px;
  box-shadow: inset 0 0 0 1px #fff;
  background: #c6d6fc;
}
.sb {
  background: url("data:image/svg+xml,%3Csvg xmlns='http://www.w3.org/2000/svg' width='14' height='14'%3E%3Cpath d='M3.500 9L7 5.500 10.500 9' fill='none' stroke='%234d6185' stroke-width='2.500'/%3E%3C/svg%3E") center no-repeat #c6d6fc;
}
.left {
  transform: rotate(-90deg);
}
.right {
  margin-left: auto;
  transform: rotate(90deg);
}
.down {
  margin-top: auto;
  transform: rotate(180deg);
}
.horiz .thumb {
  background: repeating-linear-gradient(90deg, #8cb0f8 0 1px, #eef4fe 1px 2px) center / 8px 6px no-repeat #c6d6fc;
}
.vert .thumb {
  background: repeating-linear-gradient(#8cb0f8 0 1px, #eef4fe 1px 2px) center / 8px 6px no-repeat #c6d6fc;
}
.horiz .wide {
  width: 55px;
}

/* child window */
.mdi {
  flex: 1;
  min-width: 0;
  padding: 0 2px 1px 0;
  border: 1px solid #808080;
  border-width: 1px 0 0 1px;
}
.child {
  display: flex;
  flex-direction: column;
  height: 100%;
  border: 4px solid #0a3fd8;
  border-top: 0;
  border-bottom-color: #0a2fc0;
  border-radius: 7px 7px 0 0;
  background: #ece9d8;
  overflow: hidden;
}
.child-title {
  gap: 4px;
}
.panes {
  display: flex;
  flex: 1;
  min-height: 0;
  padding: 1px 4px 2px 1px;
  border-top: 1px solid #808080;
}
.pane {
  display: flex;
  flex-direction: column;
  min-width: 0;
}
.design {
  flex: 1;
}
.strip {
  flex: none;
  height: 6px;
  padding: 1px 1px 0;
  border-top: 1px solid #fff;
}
.strip span {
  display: block;
  width: 15px;
  height: 3px;
  border: 1px solid #808080;
  border-bottom: 0;
  background: #0054e3;
}
.pane-title {
  display: flex;
  flex: none;
  align-items: center;
  gap: 4px;
  height: 17px;
  padding: 0 2px;
  background: #0054e3;
  color: #fff;
}
.pane-title h3 {
  flex: 1;
  margin-left: -2px;
  font: inherit;
  white-space: nowrap;
}
.pin {
  flex: none;
  width: 14px;
  height: 14px;
}
.design-body {
  display: grid;
  flex: 1;
  grid-template-columns: 1fr 17px;
  grid-template-rows: 1fr 16px;
  min-height: 0;
}
.canvas {
  min-width: 0;
  background: #fff;
  overflow: hidden;
}
.band {
  height: 13px;
  margin-bottom: 2px;
  padding-left: 3px;
  border: 1px solid #000;
  border-width: 1px 0;
  background: #ece9d8;
  font: bold 10px/11px "DejaVu Sans Condensed", sans-serif;
}
.band-first {
  margin-bottom: 0;
}
.form {
  display: grid;
  grid-template-columns: 61px 1fr;
  grid-auto-rows: 34px;
  gap: 0 2px;
  padding: 1px 0 3px 7px;
  font-size: 12px;
}
.form label {
  height: 18px;
  border: 1px solid #ece9d8;
  line-height: 17px;
  text-align: right;
}
.form input {
  height: 21px;
  padding: 0 0 2px;
  border: 1px solid #ece9d8;
  outline: 0;
}
.form .w-id {
  width: 74px;
}
.form .w-name {
  width: 278px;
}
.form .w-nif {
  width: 98px;
}
.form .w-full {
  width: 100%;
  border-right: 0;
}
.form .w-cp {
  width: 38px;
}
.form .w-flag {
  width: 15px;
}
.splitter {
  flex: none;
  width: 7px;
  margin-top: 6px;
  border-left: 2px solid #fff;
  border-right: 2px solid #808070;
}

/* properties */
.props {
  flex: none;
  width: 200px;
  padding-bottom: 1px;
}
.tabs {
  display: flex;
  flex: none;
  align-items: flex-end;
  height: 22px;
  position: relative;
}
.tab {
  height: 20px;
  padding: 0 3px;
  border: 1px solid #919b9c;
  border-bottom: 0;
  border-radius: 3px 3px 0 0;
  background: linear-gradient(#fff, #f0f0e8);
  white-space: nowrap;
}
.selected {
  height: 22px;
  padding: 0 6px 2px;
  border-top: 2px solid #e8a030;
  background: #fff;
}
.cut {
  flex: 1;
  min-width: 0;
  overflow: hidden;
  text-align: left;
}
.tab-scroll {
  position: absolute;
  top: 0;
  right: -1px;
  display: flex;
}
.tab-scroll button {
  width: 15px;
  height: 16px;
  border: 0;
  background: #c6d6fc;
}
.tab-scroll svg {
  display: block;
}
.prop-page {
  flex: 1;
  padding: 8px 6px 0 7px;
  border: 1px solid #919b9c;
  border-top: 0;
  background: #fff;
}
.prop-page > label {
  display: block;
  height: 16px;
  line-height: 16px;
}
.prop-page .spin {
  height: 20px;
}
.spin input {
  flex: 1;
  min-width: 0;
  padding-left: 5px;
  border: 0;
}
.spin button {
  width: 16px;
  height: 16px;
  margin-right: 1px;
  border: 0;
  border-radius: 2px;
  background: #c6d6fc;
}
.spin svg {
  display: block;
}
.color i {
  width: 24px;
  height: 11px;
  margin-left: 4px;
  border: 1px solid #000;
}
.color select {
  padding-left: 2px;
}
.prop-page .check {
  display: flex;
  align-items: center;
  gap: 2px;
  height: 19px;
  white-space: nowrap;
}
.check input {
  width: 13px;
  height: 13px;
  border: 1px solid #1c5180;
  appearance: none;
  background: linear-gradient(135deg, #dcdcd7, #fff);
}
.check.off {
  color: #aca899;
  margin-top: 1px;
}
.off input {
  border-color: #cac8bb;
  background: #fff;
}

/* status bar */
.status {
  display: flex;
  flex: none;
  gap: 2px;
  height: 20px;
  padding: 3px 0 0 1px;
  border-top: 1px solid #fff;
}
.cell {
  width: 124px;
  border: 1px solid #aca899;
  border-right-color: #fff;
  border-bottom: 0;
}
.first {
  flex: 1;
  line-height: 15px;
}
.resize {
  width: 17px;
  height: 16px;
}
```
